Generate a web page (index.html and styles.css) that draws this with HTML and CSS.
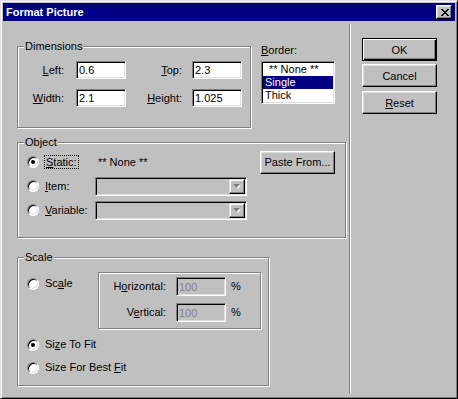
FILE: index.html
```html
<!DOCTYPE html>
<html lang="en">
<head>
    <meta charset="UTF-8">
    <title>Format Picture</title>
    <link rel="stylesheet" href="styles.css">
</head>
<body>
    <div class="window">
        <div class="titlebar">
            <span class="title">Format Picture</span>
            <button class="close-btn">
                <svg width="8" height="7" viewBox="0 0 8 7"><path d="M0 0h2v1h-2zM6 0h2v1h-2zM1 1h2v1h-2zM5 1h2v1h-2zM2 2h4v1h-4zM3 3h2v1h-2zM2 4h4v1h-4zM1 5h2v1h-2zM5 5h2v1h-2zM0 6h2v1h-2zM6 6h2v1h-2z" fill="#000"/></svg>
            </button>
        </div>

        <div class="content">
            <div class="left">
                <div class="top-row">
                    <fieldset class="group dims">
                        <legend>Dimensions</legend>
                        <div class="dims-grid">
                            <span class="lbl"><u>L</u>eft:</span>
                            <input type="text" class="field" value="0.6">
                            <span class="lbl lbl-2"><u>T</u>op:</span>
                            <input type="text" class="field" value="2.3">
                            <span class="lbl"><u>W</u>idth:</span>
                            <input type="text" class="field" value="2.1">
                            <span class="lbl lbl-2"><u>H</u>eight:</span>
                            <input type="text" class="field" value="1.025">
                        </div>
                    </fieldset>
                    <div class="border-col">
                        <div class="border-label"><u>B</u>order:</div>
                        <ul class="listbox">
                            <li class="opt opt-none">** None **</li>
                            <li class="opt selected">Single</li>
                            <li class="opt">Thick</li>
                        </ul>
                    </div>
                </div>

                <fieldset class="group object">
                    <legend>Object</legend>
                    <div class="object-grid">
                        <span class="radio checked"></span>
                        <span class="opt-label focused"><span class="focus"><u>S</u>tatic:</span></span>
                        <span class="static-value">** None **</span>
                        <button class="btn paste">Paste From...</button>

                        <span class="radio"></span>
                        <span class="opt-label"><u>I</u>tem:</span>
                        <div class="combo">
                            <span class="combo-btn">
                                <svg width="8" height="5" viewBox="0 0 8 5"><path d="M1 1h7l-3.5 4z" fill="#fff"/><path d="M0 0h7l-3.5 4z" fill="#808080"/></svg>
                            </span>
                        </div>
                        <span></span>

                        <span class="radio"></span>
                        <span class="opt-label"><u>V</u>ariable:</span>
                        <div class="combo">
                            <span class="combo-btn">
                                <svg width="8" height="5" viewBox="0 0 8 5"><path d="M1 1h7l-3.5 4z" fill="#fff"/><path d="M0 0h7l-3.5 4z" fill="#808080"/></svg>
                            </span>
                        </div>
                        <span></span>
                    </div>
                </fieldset>

                <fieldset class="group scale">
                    <legend>Scale</legend>
                    <div class="scale-body">
                        <div class="scale-top">
                            <div class="radio-item scale-radio"><span class="radio"></span><span>Sc<u>a</u>le</span></div>
                            <div class="scale-box">
                                <div class="scale-grid">
                                    <span class="lbl">H<u>o</u>rizontal:</span>
                                    <input type="text" class="field tall" value="100" disabled>
                                    <span class="pct">%</span>
                                    <span class="lbl">V<u>e</u>rtical:</span>
                                    <input type="text" class="field tall" value="100" disabled>
                                    <span class="pct">%</span>
                                </div>
                            </div>
                        </div>
                        <div class="radio-item fit"><span class="radio checked"></span><span>Si<u>z</u>e To Fit</span></div>
                        <div class="radio-item best"><span class="radio"></span><span>Size For Best <u>F</u>it</span></div>
                    </div>
                </fieldset>
            </div>

            <div class="divider"></div>

            <div class="buttons">
                <button class="btn default">OK</button>
                <button class="btn cancel">Cancel</button>
                <button class="btn"><u>R</u>eset</button>
            </div>
        </div>
    </div>
</body>
</html>
```

FILE: styles.css
```css
body {
    margin: 0;
    background-color: #c0c0c0;
    font-family: "Liberation Sans", Arial, sans-serif;
    font-size: 11px;
    line-height: 13px;
    color: #000;
}
u {
    text-decoration: underline;
    text-underline-offset: 1px;
}

/* window frame */
.window {
    width: 458px;
    height: 399px;
    box-sizing: border-box;
    border: 1px solid;
    border-color: #dfdfdf #000 #000 #dfdfdf;
    box-shadow: inset 1px 1px #fff, inset -1px -1px #808080;
    padding: 2px;
    display: flex;
    flex-direction: column;
}
.titlebar {
    height: 18px;
    flex-shrink: 0;
    background-color: #000080;
    color: #fff;
    display: flex;
    align-items: center;
    justify-content: space-between;
    padding: 0 3px 0 3px;
}
.title {
    font-weight: bold;
}
.close-btn {
    width: 16px;
    height: 14px;
    box-sizing: border-box;
    padding: 0;
    background-color: #c0c0c0;
    border: 1px solid;
    border-color: #fff #000 #000 #fff;
    box-shadow: inset -1px -1px #808080, inset 1px 1px #dfdfdf;
    display: flex;
    align-items: center;
    justify-content: center;
}
.close-btn svg {
    display: block;
    margin-left: 1px;
}

.content {
    flex: 1;
    display: flex;
}
.left {
    width: 346px;
    box-sizing: border-box;
    padding: 19px 0 0 14px;
}
.divider {
    width: 1px;
    background-color: #808080;
    border-right: 1px solid #fff;
    margin: 3px 0;
}
.buttons {
    padding: 17px 0 0 11px;
    display: flex;
    flex-direction: column;
}
.buttons .btn {
    width: 75px;
    margin-bottom: 3px;
}
.buttons .cancel {
    margin-bottom: 4px;
}

/* controls */
.btn {
    height: 23px;
    box-sizing: border-box;
    padding: 0;
    font-family: inherit;
    font-size: 11px;
    color: #000;
    background-color: #c0c0c0;
    border: 1px solid;
    border-color: #fff #000 #000 #fff;
    box-shadow: inset -1px -1px #808080, inset 1px 1px #dfdfdf;
}
.btn.default {
    border-color: #000;
    box-shadow: inset 1px 1px #fff, inset -1px -1px #000, inset -2px -2px #808080;
}
.field {
    width: 50px;
    height: 18px;
    box-sizing: border-box;
    margin: 0;
    padding: 0 2px;
    font-family: inherit;
    font-size: 11px;
    color: #000;
    background-color: #fff;
    border: 1px solid;
    border-color: #808080 #fff #fff #808080;
    box-shadow: inset 1px 1px #000, inset -1px -1px #dfdfdf;
    outline: none;
}
.field.tall {
    height: 19px;
}
.field:disabled {
    background-color: #c0c0c0;
    color: #808080;
}
.radio {
    width: 12px;
    height: 12px;
    box-sizing: border-box;
    border-radius: 50%;
    border: 1px solid;
    border-color: #808080 #fff #fff #808080;
    box-shadow: inset 1px 1px #000, inset -1px -1px #dfdfdf;
    background-color: #fff;
    display: flex;
    align-items: center;
    justify-content: center;
}
.radio.checked::after {
    content: "";
    width: 4px;
    height: 4px;
    border-radius: 50%;
    background-color: #000;
}

/* group boxes */
.group {
    margin: 0;
    padding: 0;
    min-width: 0;
    box-sizing: border-box;
    border: 1px solid #808080;
    box-shadow: inset 1px 1px #fff, 1px 1px #fff;
}
.group legend {
    margin-left: 6px;
    padding: 0 1px;
    background-color: #c0c0c0;
    line-height: 13px;
}

.top-row {
    display: flex;
    align-items: flex-start;
}
.dims {
    width: 234px;
}
.dims-grid {
    display: grid;
    grid-template-columns: 58px 50px 66px 50px;
    row-gap: 10px;
    align-items: center;
    padding: 8px 0 20px 0;
}
.lbl {
    text-align: right;
    padding-right: 12px;
}
.lbl-2 {
    padding-right: 10px;
}

.border-col {
    margin-left: 10px;
    padding-top: 4px;
}
.border-label {
    margin-bottom: 4px;
}
.listbox {
    list-style: none;
    margin: 0;
    width: 74px;
    height: 43px;
    box-sizing: border-box;
    background-color: #fff;
    border: 1px solid;
    border-color: #808080 #fff #fff #808080;
    box-shadow: inset 1px 1px #000, inset -1px -1px #dfdfdf;
    padding: 1px;
}
.opt {
    height: 13px;
    padding-left: 2px;
}
.opt-none {
    padding-left: 6px;
}
.opt.selected {
    background-color: #000080;
    color: #fff;
}

.object {
    width: 329px;
    margin-top: 8px;
}
.object-grid {
    display: grid;
    grid-template-columns: 17px 51px 165px 75px;
    grid-auto-rows: 24px;
    align-items: center;
    padding: 1px 0 15px 9px;
}
.opt-label {
    padding-left: 1px;
}
.opt-label.focused {
    padding-left: 0;
}
.focus {
    border: 1px dotted #000;
    padding: 0 1px;
}
.static-value {
    padding-left: 3px;
}
.paste {
    width: 75px;
}
.combo {
    width: 152px;
    height: 19px;
    box-sizing: border-box;
    background-color: #c0c0c0;
    border: 1px solid;
    border-color: #808080 #fff #fff #808080;
    box-shadow: inset 1px 1px #000, inset -1px -1px #dfdfdf;
    padding: 1px;
    display: flex;
    justify-content: flex-end;
}
.combo-btn {
    width: 16px;
    height: 15px;
    box-sizing: border-box;
    border: 1px solid;
    border-color: #dfdfdf #000 #000 #dfdfdf;
    box-shadow: inset -1px -1px #808080, inset 1px 1px #fff;
    display: flex;
    align-items: center;
    justify-content: center;
}
.combo-btn svg {
    display: block;
}

.scale {
    width: 252px;
    margin-top: 13px;
}
.scale-body {
    padding: 0 0 11px 9px;
}
.scale-top {
    display: flex;
    align-items: flex-start;
}
.radio-item {
    height: 13px;
    display: flex;
    align-items: center;
    gap: 6px;
}
.scale-radio {
    width: 71px;
    margin-top: 13px;
}
.scale-box {
    width: 163px;
    margin-top: 8px;
    box-sizing: border-box;
    border: 1px solid #808080;
    box-shadow: inset 1px 1px #fff, 1px 1px #fff;
}
.scale-grid {
    display: grid;
    grid-template-columns: 77px 50px auto;
    row-gap: 7px;
    align-items: center;
    padding: 4px 0 6px 0;
}
.scale-grid .lbl {
    padding-right: 10px;
}
.pct {
    padding-left: 5px;
}
.fit {
    margin-top: 9px;
}
.best {
    margin-top: 10px;
}
```
